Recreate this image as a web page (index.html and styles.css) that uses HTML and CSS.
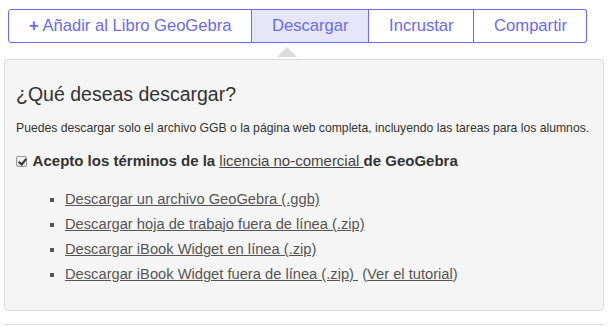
FILE: index.html
```html
<!DOCTYPE html>
<html lang="es">
<head>
<meta charset="utf-8">
<link rel="stylesheet" href="styles.css">
</head>
<body>
<div class="tabs">
  <a class="tab"><span class="plus">+</span> Añadir al Libro GeoGebra</a>
  <a class="tab active">Descargar</a>
  <a class="tab">Incrustar</a>
  <a class="tab">Compartir</a>
</div>
<div class="arrow-row"><span class="arrow"></span></div>
<div class="panel">
  <h2 class="title">¿Qué deseas descargar?</h2>
  <p class="desc">Puedes descargar solo el archivo GGB o la página web completa, incluyendo las tareas para los alumnos.</p>
  <label class="accept"><input class="chk" type="checkbox" checked> Acepto los términos de la <a class="lic">licencia no-comercial </a>de GeoGebra</label>
  <ul class="links">
    <li><a>Descargar un archivo GeoGebra (.ggb)</a></li>
    <li><a>Descargar hoja de trabajo fuera de línea (.zip)</a></li>
    <li><a>Descargar iBook Widget en línea (.zip)</a></li>
    <li><a>Descargar iBook Widget fuera de línea (.zip)&nbsp;</a>&nbsp;(<a>Ver el tutorial</a>)</li>
  </ul>
</div>
<div class="footer-line"></div>
</body>
</html>
```

FILE: styles.css
```css
html, body {
  margin: 0;
  padding: 0;
  background: #fff;
}
body {
  font-family: "Liberation Sans", Arial, sans-serif;
  color: #333;
}
.tabs {
  display: flex;
  margin: 9px 0 0 8px;
}
.tab {
  display: block;
  font-size: 16.6px;
  line-height: 32px;
  height: 32px;
  padding: 0 19.5px 0 20px;
  color: #6a6af2;
  border: 1px solid #6a6af2;
  border-left: none;
  background: #fff;
}
.tab:first-child {
  border-left: 1px solid #6a6af2;
  border-radius: 3px 0 0 3px;
  padding: 0 19.5px 0 20px;
}
.tab:last-child {
  border-radius: 0 3px 3px 0;
}
.tab.active {
  background: #e6e6fb;
}
.plus {
  font-weight: bold;
}
.arrow-row {
  height: 16px;
  position: relative;
}
.arrow {
  position: absolute;
  left: 277px;
  top: 4px;
  width: 0;
  height: 0;
  border-left: 10px solid transparent;
  border-right: 10px solid transparent;
  border-bottom: 10px solid #dcdcdc;
}
.panel {
  margin: 0 9px 0 4px;
  background: #f5f5f5;
  border: 1px solid #dcdcdc;
  border-radius: 4px;
  padding: 0 11px 0 11px;
  box-sizing: border-box;
  height: 252px;
}
.title {
  font-size: 19.5px;
  font-weight: normal;
  margin: 22px 0 0 0;
  line-height: 24px;
}
.desc {
  font-size: 12.2px;
  margin: 15px 0 0 0;
  line-height: 14px;
}
.accept {
  display: flex;
  align-items: center;
  font-size: 15px;
  font-weight: bold;
  margin-top: 17px;
  line-height: 18px;
  white-space: pre;
}
.chk {
  appearance: none;
  -webkit-appearance: none;
  position: relative;
  margin: 0 2px 0 0;
  width: 11px;
  height: 11px;
  box-sizing: border-box;
  border: 1px solid #9a9a9a;
  border-radius: 2px;
  background: linear-gradient(#f4f4f4, #dedede);
}
.chk::after {
  content: "";
  position: absolute;
  left: 3px;
  top: 0px;
  width: 3px;
  height: 6px;
  border: solid #333;
  border-width: 0 2px 2px 0;
  transform: rotate(40deg);
}
.lic {
  font-weight: normal;
  text-decoration: underline;
  color: #444;
}
.links {
  list-style: square;
  margin: 17px 0 0 0;
  padding: 0 0 0 49px;
  font-size: 14.7px;
  color: #555;
}
.links li {
  line-height: 25px;
}
.links a {
  text-decoration: underline;
  color: #555;
}
.footer-line {
  margin: 13px 9px 0 4px;
  border-top: 1px solid #dcdcdc;
}
```
